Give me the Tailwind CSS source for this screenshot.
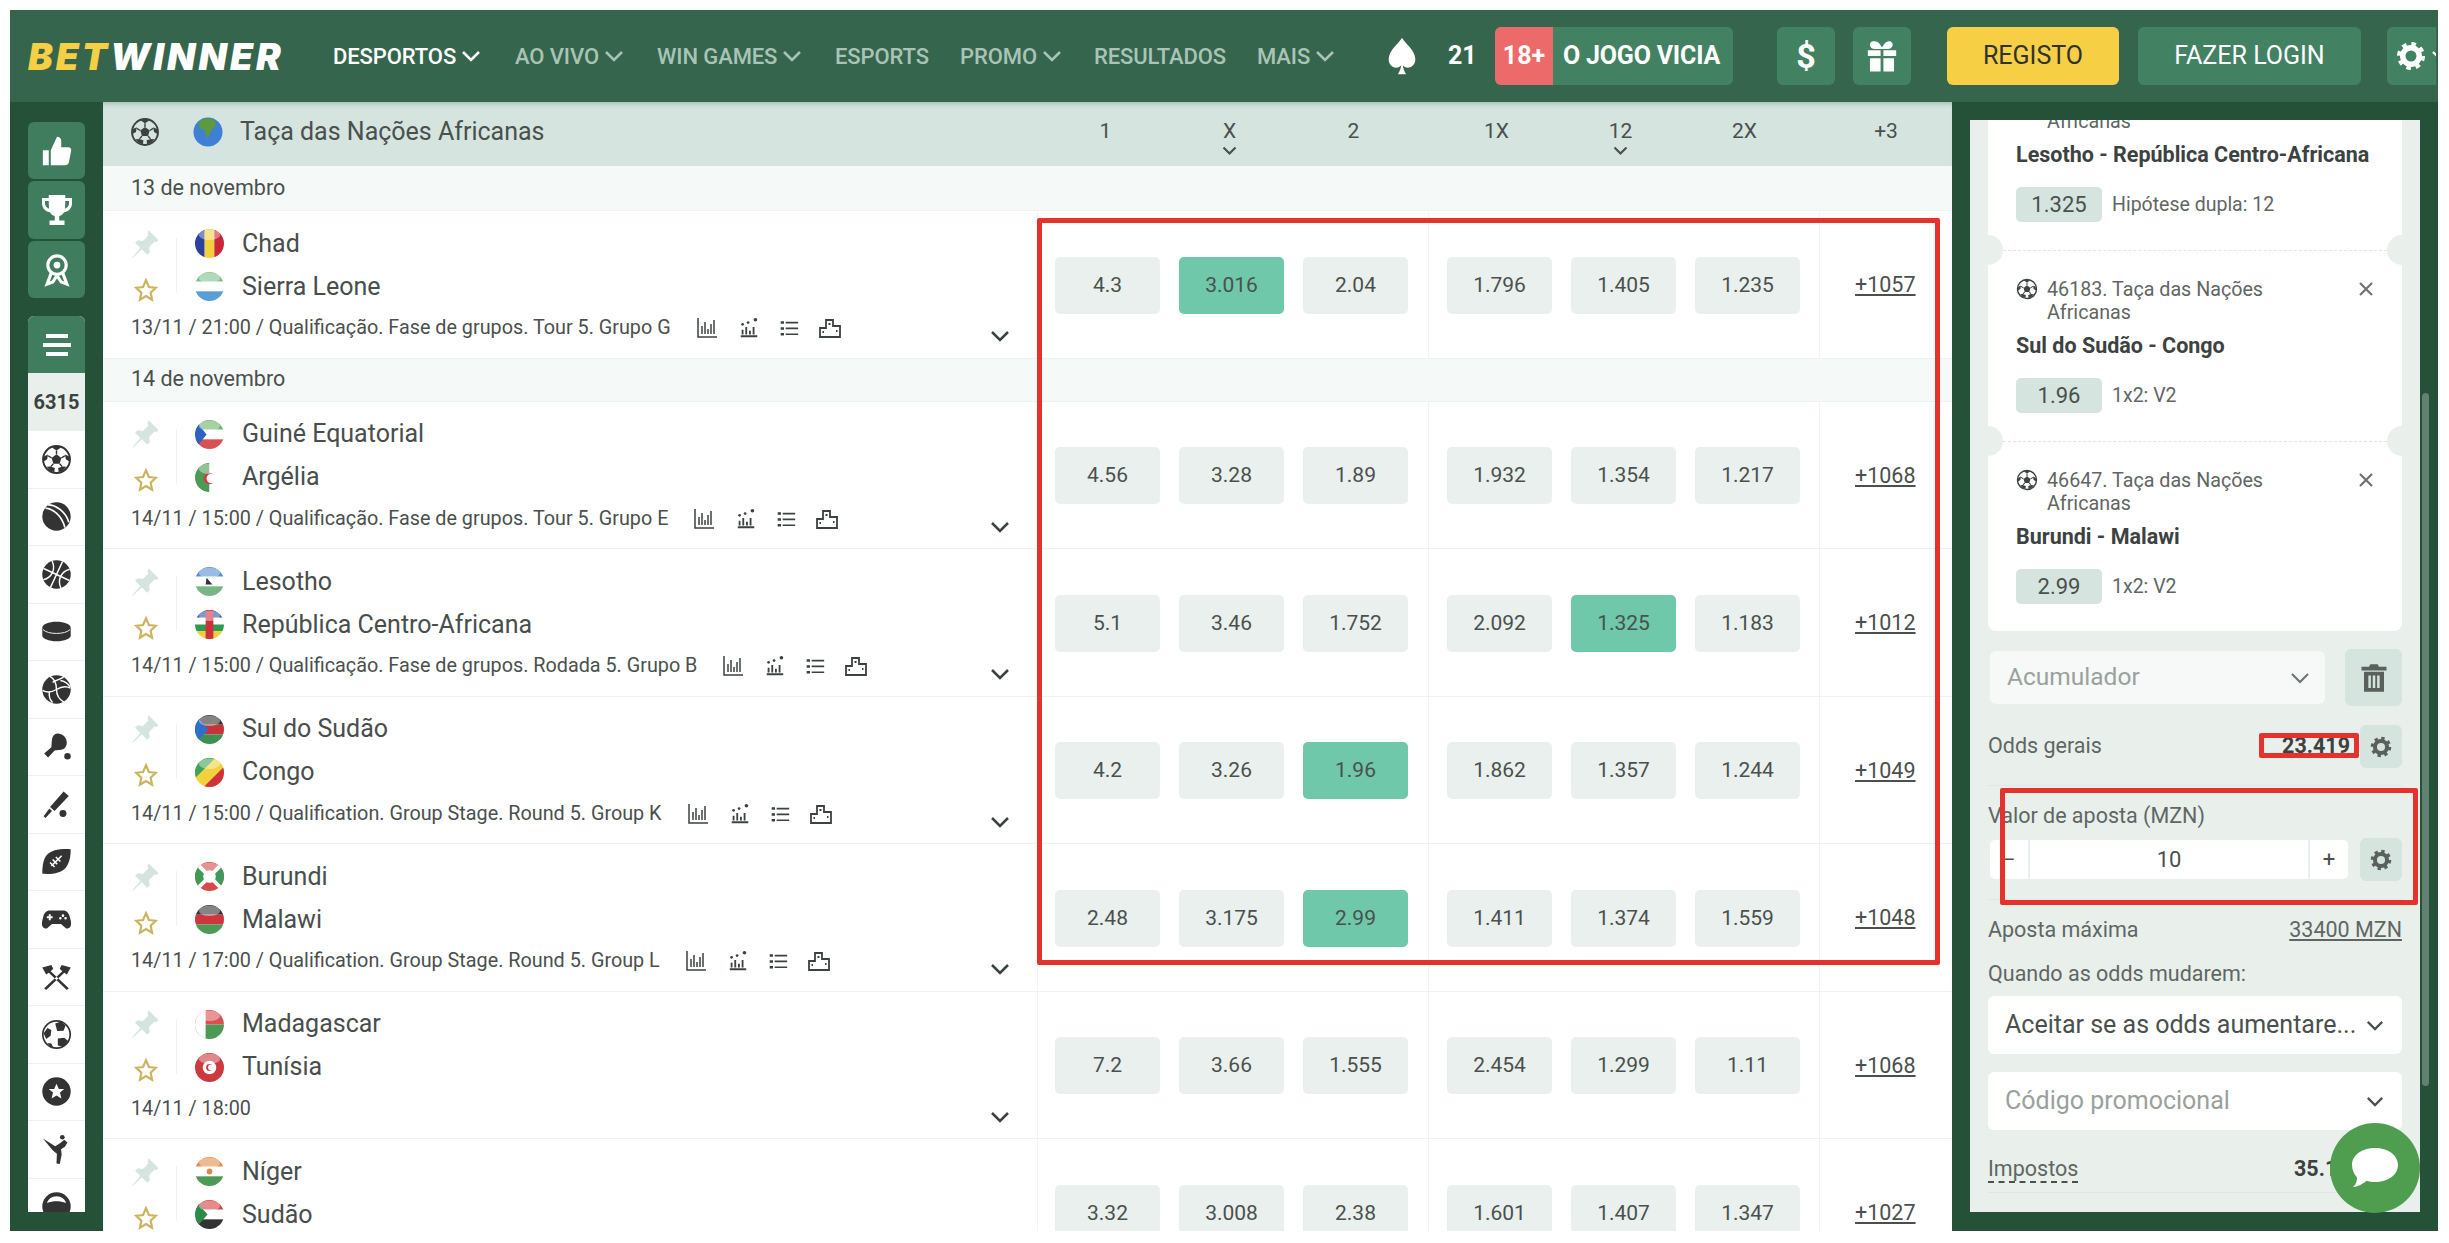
<!DOCTYPE html>
<html lang="pt">
<head>
    <meta charset="UTF-8">
    <title>Betwinner - Taça das Nações Africanas</title>
    <script src="https://cdn.jsdelivr.net/npm/@tailwindcss/browser@4"></script>
</head>
<body class="bg-white font-[family-name:Roboto,sans-serif] text-[#3c423f]">
    <!-- icon sprite -->
    <svg class="hidden" xmlns="http://www.w3.org/2000/svg">
        <symbol id="i-thumb" viewBox="0 0 24 24"><path d="M2 11.5h4.2V22H2zM7.6 11.5 12 2c1.8 0 3 1.2 3 3v4.4h5c1.4 0 2.3 1.100 2 2.400l-1.600 8.200c-.2 1.100-1.100 2-2.300 2H7.600z"/></symbol>
        <symbol id="i-trophy" viewBox="0 0 24 24"><path fill-rule="evenodd" d="M6.500 2h11v2H22v3.500c0 3-2 5.500-5.200 6-.8 1.300-2 2.200-3.300 2.500V19H17v3H7v-3h3.500v-3c-1.300-.3-2.500-1.200-3.300-2.500C4 13 2 10.500 2 7.500V4h4.500zM4 6v1.500c0 1.700 1 3 2.700 3.600C6.600 10 6.500 8 6.500 6zM20 6h-2.500c0 2-.1 4-.2 5.100C19 10.500 20 9.200 20 7.500z"/></symbol>
        <symbol id="i-award" viewBox="0 0 24 24"><g fill="none" stroke="currentColor" stroke-width="2.200"><circle cx="12" cy="8.500" r="6.500"/><path d="M8 14 5 22l4-1.500L12 16l3 4.500 4 1.500-3-8"/></g><circle cx="12" cy="8.500" r="2.400"/></symbol>
        <symbol id="i-soccer" viewBox="0 0 24 24"><circle cx="12" cy="12" r="10.400" fill="none" stroke="currentColor" stroke-width="1.500"/><path d="m12 8 3.800 2.800-1.400 4.400H9.600l-1.400-4.400zM12 1.800l3.500 1-3.500 2.200-3.500-2.200zM21.600 9.500l.4 4-2.800-1.600-.6-3.800zM2.400 9.500l3-1.400-.6 3.800L2 13.500zM17 20.500l-3.300 1.400-.4-3.400 3.500-1 2.800.2zM7 20.500l-2.600-2.800 2.800-.2 3.500 1-.4 3.400z"/><path d="M12 5v3M15.800 10.800l2.800-1.700M14.400 15.200l2 2.300M9.600 15.200l-2 2.300M8.200 10.800 5.400 9.100" stroke="currentColor" stroke-width="1.100"/></symbol>
        <symbol id="i-tennis" viewBox="0 0 24 24"><circle cx="12" cy="12" r="11"/><path d="M3.500 5.500C9 6 16 11 18.500 20.500M5.500 3C12 3 19.500 9 21.500 16.500" fill="none" stroke="#fff" stroke-width="1.300"/></symbol>
        <symbol id="i-basket" viewBox="0 0 24 24"><circle cx="12" cy="12" r="11"/><path d="M1 12h22M12 1v22M4.500 4c3 2.500 4 5 4 8s-1 5.500-4 8M19.500 4c-3 2.500-4 5-4 8s1 5.500 4 8" fill="none" stroke="#fff" stroke-width="1.100" transform="rotate(25 12 12)"/></symbol>
        <symbol id="i-puck" viewBox="0 0 24 24"><path d="M1 9c0-2.500 5-4.500 11-4.500S23 6.500 23 9v6c0 2.500-5 4.500-11 4.500S1 17.500 1 15z"/><path d="M1.500 10.500c2 2 6 3 10.500 3s8.500-1 10.500-3" fill="none" stroke="#fff" stroke-width=".7"/></symbol>
        <symbol id="i-volley" viewBox="0 0 24 24"><circle cx="12" cy="12" r="11"/><path d="M12 12C12 7 10 3.500 7 1.800M12 12c4-2.500 8-2.500 10.800-1M12 12c0 4.500 2.500 8 6 10M12 12c-4 2.300-8 2.300-10.800.6M6.500 14c-.5 3 .5 6 2.500 8M15 5c3 .5 6 2.500 7.500 5M9 6.500C12 4.500 15 4 17.500 2.500" fill="none" stroke="#fff" stroke-width="1.100"/></symbol>
        <symbol id="i-pingpong" viewBox="0 0 24 24"><path d="M13 2c3.500 0 7 3 7 7 0 1.800-1 3.500-2 4.500-1.500 1.500-5.500 1-7.500 1.500l-5 5.500-3-3L8 12.500c.5-2 0-6 1.200-8.300C10 2.800 11.500 2 13 2z"/><circle cx="20.500" cy="19.500" r="2.500"/></symbol>
        <symbol id="i-cricket" viewBox="0 0 24 24"><path d="m17.500 2 4 3.500L10.500 17l-3.500-3zM6.500 15l2 2-5 5.500-1.500-1.500z"/><circle cx="17" cy="19" r="2.700"/></symbol>
        <symbol id="i-football" viewBox="0 0 24 24"><path d="M23 2.500c-8-.5-15 .5-18.500 4.500C2 10 1 14.500 1 21.500c8 .5 14.500-.5 18-4.500 2.700-3.500 4-8 4-14.500z"/><path d="m8 15.500 8-8M9 10.500l3.500 3.500M11.500 8.500l3.500 3.500M7 12.800l3.500 3.500" stroke="#fff" stroke-width="1.200" fill="none"/></symbol>
        <symbol id="i-pad" viewBox="0 0 24 24"><path fill-rule="evenodd" d="M7 5h10c3 0 4.500 2 5.300 5 .8 3 1.500 5.500.5 7.500-.8 1.500-2.800 2-4 .8L15.500 15.500h-7L5.200 18.300c-1.200 1.200-3.200.7-4-.8-1-2 -.3-4.500.5-7.500C2.500 7 4 5 7 5zM6 8v1.500H4.500V11H6v1.500h1.500V11H9V9.500H7.500V8zM17 8a1 1 0 1 0 0 2 1 1 0 0 0 0-2zm-2 2a1 1 0 1 0 0 2 1 1 0 0 0 0-2zm4 0a1 1 0 1 0 0 2 1 1 0 0 0 0-2z"/></symbol>
        <symbol id="i-hammers" viewBox="0 0 24 24"><path d="M1 5l7-2 1.500 3L7.500 8l14 13-1.500 1.500L6 9l-2 1.500zM23 5l-7-2-1.500 3 2 2-14 13L4 22.500 18 9l2 1.500z"/></symbol>
        <symbol id="i-soccer2" viewBox="0 0 24 24"><circle cx="12" cy="12" r="10.600" fill="none" stroke="currentColor" stroke-width="1.300"/><path d="M11 3.500l4.500-1.600 3.500 3.100-1.500 4-5 .2zM2 11l3-4 3 1.500-.5 4.500L4 15.500zM13 15l5-.5 3 2.500-3.500 4.500-4.500-1zM5 18.500l3 .5 1.500 3c-2-.3-3.500-1.800-4.500-3.500z"/></symbol>
        <symbol id="i-starball" viewBox="0 0 24 24"><path fill-rule="evenodd" d="M12 1a11 11 0 1 1 0 22 11 11 0 0 1 0-22zm0 5-1.800 4H6l3.300 2.800L8.200 17.500 12 15l3.800 2.500-1.100-4.700L18 10h-4.200z"/></symbol>
        <symbol id="i-kick" viewBox="0 0 24 24"><path d="M1.500 3.500 11 9.500l4-2.500 3-2.500 2.500 2-2 3.300-3 2 .5 4-1.500 7.500-2.500-.5.300-7.500L9 12.500z"/><circle cx="16.500" cy="2.500" r="1.800"/></symbol>
        <symbol id="i-wheel" viewBox="0 0 24 24"><path fill-rule="evenodd" d="M12 1a11 11 0 1 1 0 22 11 11 0 0 1 0-22zm0 3a8 8 0 0 0-7.500 5.300C7 8.500 9.500 8 12 8s5 .5 7.500 1.300A8 8 0 0 0 12 4z"/></symbol>
        <symbol id="i-pin" viewBox="0 0 24 24"><path d="M14 1l8 8-2 1.500-1-.7-4.500 4.500.5 4.200-2 2-4.300-4.300L1.500 23l-.5-.5 6.500-7.300L3.300 11l2-2 4.200.5L14 5l-.8-1z"/></symbol>
        <symbol id="i-star" viewBox="0 0 24 24"><path d="m12 3 2.700 6.200 6.300.7-4.700 4.500 1.300 6.600-5.600-3.400L6.400 21l1.300-6.600L3 9.900l6.300-.7z" fill="none" stroke="currentColor" stroke-width="2"/></symbol>
        <symbol id="i-bars" viewBox="0 0 24 24"><path d="M3 2v19h19M7 18V10M10 18V6M13 18v-5M16 18V8M19 18V4" fill="none" stroke="currentColor" stroke-width="1.500"/></symbol>
        <symbol id="i-dots" viewBox="0 0 24 24"><path d="M3 21h18M5 19v-5M9 19v-8M13 19v-4M17 19v-8" fill="none" stroke="currentColor" stroke-width="2"/><circle cx="5" cy="8" r="1.500"/><circle cx="11" cy="6" r="1.500"/><circle cx="19" cy="3" r="2"/></symbol>
        <symbol id="i-list" viewBox="0 0 24 24"><path d="M2 4h4v3H2zM2 11h4v3H2zM2 18h4v3H2zM8 4.500h15v2H8zM8 11.500h15v2H8zM8 18.500h15v2H8z"/></symbol>
        <symbol id="i-podium" viewBox="0 0 24 24"><path d="M2 21v-9h6V4h7v6h7v11z" fill="none" stroke="currentColor" stroke-width="1.800"/><path d="M10.500 7h2v2h-2zM4.500 15h1.500v2H4.500zM18 14h1.500v2H18z" fill="currentColor"/></symbol>
        <symbol id="i-gear" viewBox="0 0 24 24"><circle cx="12" cy="12" r="6.600" fill="none" stroke="currentColor" stroke-width="4.400"/><circle cx="12" cy="12" r="9.500" fill="none" stroke="currentColor" stroke-width="3.400" stroke-dasharray="3.600 3.860"/></symbol>
        <symbol id="i-trash" viewBox="0 0 24 24"><path fill-rule="evenodd" d="M9 1h6l1 2h6v3H2V3h6zM4 7h16v16H4zm3.500 3v10h2V10zm3.500 0v10h2V10zm3.500 0v10h2V10z"/></symbol>
        <symbol id="i-gift" viewBox="0 0 24 24"><path d="M2 8h9v4H2zM13 8h9v4h-9zM3.500 13.500H11V23H3.500zM13 13.500h7.500V23H13zM7 1.500c2 0 3.800 2 5 4.500 1.200-2.500 3-4.500 5-4.500 1.800 0 2.800 1.300 2.500 3-.2 1.300-1.500 2.500-3.500 2.500H7C5 7 3.700 5.800 3.500 4.500c-.3-1.700.7-3 2.500-3z"/></symbol>
        <symbol id="i-spade" viewBox="0 0 24 24"><path d="M12 1c1.500 3 8 7.500 8 13 0 3-2 5-4.500 5-1.300 0-2.300-.6-3-1.400.2 2 .8 3.400 2 5.400h-5c1.200-2 1.800-3.400 2-5.400-.7.800-1.700 1.400-3 1.400C6 19 4 17 4 14 4 8.500 10.500 4 12 1z"/></symbol>
        <radialGradient id="gloss" cx="50%" cy="45%" r="55%"><stop offset="55%" stop-color="#fff" stop-opacity=".12"/><stop offset="100%" stop-color="#555" stop-opacity=".35"/></radialGradient>
    </svg>

    <div id="root" class="relative ml-[10px] mt-[10px] w-[2428px] h-[1221px] overflow-hidden flex flex-col bg-[#265139]">
        <!-- top bar -->
        <header class="h-[92px] shrink-0 bg-[#35654d] flex items-center pl-[18px] pr-0 text-white">
            <a class="w-[305px] shrink-0 font-[family-name:Inter,sans-serif] font-black italic text-[37px] tracking-[3px] leading-none">
                <span class="text-[#f7cf45]">BET</span><span>WINNER</span>
            </a>
            <nav class="flex items-center shrink-0 text-[22px] font-medium tracking-[-0.1px]">
                <a class="w-[182px] flex items-center gap-[5px] text-white">DESPORTOS<svg class="w-[20px] h-[12px]" viewBox="0 0 20 12" fill="none" stroke="currentColor" stroke-width="2.500"><path d="m2 2 8 8 8-8"/></svg></a>
                <a class="w-[142px] flex items-center gap-[5px] text-[#a9c4b6]">AO VIVO<svg class="w-[20px] h-[12px]" viewBox="0 0 20 12" fill="none" stroke="currentColor" stroke-width="2.500"><path d="m2 2 8 8 8-8"/></svg></a>
                <a class="w-[178px] flex items-center gap-[5px] text-[#a9c4b6]">WIN GAMES<svg class="w-[20px] h-[12px]" viewBox="0 0 20 12" fill="none" stroke="currentColor" stroke-width="2.500"><path d="m2 2 8 8 8-8"/></svg></a>
                <a class="w-[125px] text-[#a9c4b6]">ESPORTS</a>
                <a class="w-[134px] flex items-center gap-[5px] text-[#a9c4b6]">PROMO<svg class="w-[20px] h-[12px]" viewBox="0 0 20 12" fill="none" stroke="currentColor" stroke-width="2.500"><path d="m2 2 8 8 8-8"/></svg></a>
                <a class="w-[163px] text-[#a9c4b6]">RESULTADOS</a>
                <a class="w-[125px] flex items-center gap-[5px] text-[#a9c4b6]">MAIS<svg class="w-[20px] h-[12px]" viewBox="0 0 20 12" fill="none" stroke="currentColor" stroke-width="2.500"><path d="m2 2 8 8 8-8"/></svg></a>
            </nav>
            <svg class="w-[40px] h-[42px] shrink-0 fill-white"><use href="#i-spade"/></svg>
            <span class="ml-[26px] w-[47px] shrink-0 font-bold text-[25px]">21</span>
            <div class="flex h-[58px] w-[238px] shrink-0 rounded-[6px] overflow-hidden bg-[#438163] font-bold text-[25px]">
                <span class="w-[58px] bg-[#ec6a6a] flex items-center justify-center">18+</span>
                <span class="flex-1 flex items-center pl-[10px] whitespace-nowrap tracking-[-0.2px]">O JOGO VICIA</span>
            </div>
            <div class="ml-[44px] w-[58px] h-[58px] shrink-0 rounded-[6px] bg-[#438163] flex items-center justify-center font-bold text-[34px]">$</div>
            <div class="ml-[18px] w-[58px] h-[58px] shrink-0 rounded-[6px] bg-[#438163] flex items-center justify-center"><svg class="w-[34px] h-[34px] fill-white"><use href="#i-gift"/></svg></div>
            <div class="ml-[36px] w-[172px] h-[58px] shrink-0 rounded-[6px] bg-[#f7cf45] text-[#2d3330] flex items-center justify-center text-[25px]">REGISTO</div>
            <div class="ml-[19px] w-[223px] h-[58px] shrink-0 rounded-[6px] bg-[#438163] flex items-center justify-center text-[25px]">FAZER LOGIN</div>
            <div class="ml-[26px] w-[49px] h-[58px] shrink-0 rounded-l-[6px] overflow-hidden bg-[#438163] pl-[9px] flex items-center"><svg class="w-[30px] h-[30px] shrink-0 text-white"><use href="#i-gear"/></svg><svg class="ml-[6px] w-[14px] h-[10px] shrink-0" viewBox="0 0 14 10" fill="none" stroke="#fff" stroke-width="2.200"><path d="m1 1 6 6 6-6"/></svg></div>
        </header>

        <div class="flex flex-1 min-h-0">
            <!-- left rail -->
            <aside class="w-[93px] shrink-0 pl-[18px] pt-[20px]">
                <div class="w-[57px] flex flex-col gap-[2px] text-white">
                    <div class="h-[57px] rounded-[6px] bg-[#3f7d5e] flex items-center justify-center"><svg class="w-[34px] h-[34px] fill-white"><use href="#i-thumb"/></svg></div>
                    <div class="h-[58px] rounded-[6px] bg-[#3f7d5e] flex items-center justify-center"><svg class="w-[36px] h-[36px] fill-white"><use href="#i-trophy"/></svg></div>
                    <div class="h-[57px] rounded-[6px] bg-[#3f7d5e] flex items-center justify-center"><svg class="w-[34px] h-[34px] fill-white text-white"><use href="#i-award"/></svg></div>
                </div>
                <div class="mt-[18px] w-[57px] h-[896px] overflow-hidden rounded-t-[6px] bg-white">
                    <div class="h-[57px] bg-[#3f7d5e] flex flex-col items-center justify-center gap-[5px]">
                        <span class="block w-[22px] h-[4px] bg-white"></span>
                        <span class="block w-[28px] h-[4px] bg-white"></span>
                        <span class="block w-[22px] h-[4px] bg-white"></span>
                    </div>
                    <div class="h-[58px] bg-[#e9f0ec] flex items-center justify-center text-[20px] font-bold text-[#3c423f]">6315</div>
                    <div id="sports"></div>
                </div>
            </aside>

            <!-- events list -->
            <main class="w-[1849px] shrink-0 bg-white overflow-hidden">
                <div class="h-[64px] pb-[4px] bg-[#d5e4de] flex items-center text-[#4a504d] shadow-[inset_0_6px_6px_-6px_rgba(38,81,57,0.45)]">
                    <div class="w-[934px] shrink-0 flex items-center pl-[27px] text-[25px]">
                        <svg class="w-[30px] h-[30px] text-[#3c423f] fill-[#3c423f]"><use href="#i-soccer"/></svg>
                        <svg class="ml-[33px] w-[30px] h-[30px]" viewBox="0 0 30 30"><circle cx="15" cy="15" r="14.500" fill="#3f7fd6"/><path d="M9 3c4-2 10-2 13 1 2 3 0 6-3 8-1 3-3 7-5 9-2-3-1-6-3-8-3-1-6-2-5-6 0-2 1-3 3-4z" fill="#5e9a3c"/></svg>
                        <span class="ml-[17px]">Taça das Nações Africanas</span>
                    </div>
                    <div class="w-[391px] shrink-0 flex pl-[18px] gap-[19px] text-[21px]">
                        <span class="w-[105px] text-center -translate-x-[2px]">1</span>
                        <span class="w-[105px] text-center relative -translate-x-[2px]">X<svg class="absolute left-[45px] top-[30px] w-[15px] h-[10px]" viewBox="0 0 15 10" fill="none" stroke="currentColor" stroke-width="2.200"><path d="m1.500 1.500 6 6 6-6"/></svg></span>
                        <span class="w-[105px] text-center -translate-x-[2px]">2</span>
                    </div>
                    <div class="w-[391px] shrink-0 flex pl-[19px] gap-[19px] text-[21px]">
                        <span class="w-[105px] text-center -translate-x-[3px]">1X</span>
                        <span class="w-[105px] text-center relative -translate-x-[3px]">12<svg class="absolute left-[45px] top-[30px] w-[15px] h-[10px]" viewBox="0 0 15 10" fill="none" stroke="currentColor" stroke-width="2.200"><path d="m1.500 1.500 6 6 6-6"/></svg></span>
                        <span class="w-[105px] text-center -translate-x-[3px]">2X</span>
                    </div>
                    <div class="flex-1 text-[21px] pl-[34px]"><span class="block w-[66px] text-center">+3</span></div>
                </div>
                <div id="rows"></div>
            </main>

            <!-- coupon -->
            <aside class="relative w-[486px] shrink-0 px-[18px] pt-[18px] pb-[19px]">
                <div class="h-full overflow-hidden bg-[#e9f0ec] px-[18px]">
                    <div id="tickets" class="relative -mt-[61px] bg-white rounded-[8px]"></div>
                    <div class="mt-[18px] flex items-center">
                        <div class="ml-[2px] w-[335px] h-[53px] rounded-[6px] bg-[#f6f9f8] flex items-center justify-between pl-[17px] pr-[15px] text-[24.500px] text-[#9aa19d]">Acumulador<svg class="w-[20px] h-[12px] text-[#6d7470]" viewBox="0 0 20 12" fill="none" stroke="currentColor" stroke-width="2"><path d="m2 2 8 8 8-8"/></svg></div>
                        <div class="ml-auto w-[57px] h-[57px] rounded-[6px] bg-[#d5e4de] flex items-center justify-center"><svg class="w-[30px] h-[30px] fill-[#5a615d]"><use href="#i-trash"/></svg></div>
                    </div>
                    <div class="mt-[19px] h-[43px] flex items-center text-[21.500px] text-[#5f6663]">
                        <span>Odds gerais</span>
                        <span class="ml-auto mr-[10px] font-bold text-[#3c423f]">23.419</span>
                        <div class="w-[42px] h-[43px] rounded-[6px] bg-[#d5e4de] flex items-center justify-center"><svg class="w-[22px] h-[22px] text-[#5a615d]"><use href="#i-gear"/></svg></div>
                    </div>
                    <div class="mt-[17px] border-y border-[#dfe8e3] pt-[18px] pb-[18px]">
                        <div class="h-[24px] leading-[24px] text-[21.500px] text-[#5f6663]">Valor de aposta (MZN)</div>
                        <div class="mt-[10px] h-[43px] flex items-center">
                            <div class="ml-[2px] w-[358px] h-[39px] rounded-[5px] bg-white flex items-center text-[22px] text-[#4a504d]">
                                <span class="w-[40px] h-full border-r-2 border-[#e9f0ec] flex items-center justify-center">−</span>
                                <span class="flex-1 text-center">10</span>
                                <span class="w-[40px] h-full border-l-2 border-[#e9f0ec] flex items-center justify-center">+</span>
                            </div>
                            <div class="ml-auto w-[42px] h-[43px] rounded-[6px] bg-[#d5e4de] flex items-center justify-center"><svg class="w-[22px] h-[22px] text-[#5a615d]"><use href="#i-gear"/></svg></div>
                        </div>
                    </div>
                    <div class="mt-[18px] h-[24px] leading-[24px] flex justify-between text-[21.500px] text-[#5f6663]"><span>Aposta máxima</span><span class="underline">33400 MZN</span></div>
                    <div class="mt-[20px] h-[24px] leading-[24px] text-[21.500px] text-[#5f6663]">Quando as odds mudarem:</div>
                    <div class="mt-[10px] h-[58px] rounded-[6px] bg-white flex items-center justify-between pl-[17px] pr-[18px] text-[25px] text-[#4a504d]"><span class="whitespace-nowrap">Aceitar se as odds aumentare...</span><svg class="w-[18px] h-[11px] shrink-0" viewBox="0 0 20 12" fill="none" stroke="currentColor" stroke-width="2.500"><path d="m2 2 8 8 8-8"/></svg></div>
                    <div class="mt-[18px] h-[58px] rounded-[6px] bg-white flex items-center justify-between pl-[17px] pr-[18px] text-[25px] text-[#9aa19d]"><span>Código promocional</span><svg class="w-[18px] h-[11px] text-[#4a504d]" viewBox="0 0 20 12" fill="none" stroke="currentColor" stroke-width="2.500"><path d="m2 2 8 8 8-8"/></svg></div>
                    <div class="mt-[27px] pb-[12px] border-b border-[#dfe8e3] h-[36px] flex justify-between text-[21.500px] text-[#5f6663]"><span class="leading-[24px] h-[26px] border-b-2 border-dashed border-[#4a504d]">Impostos</span><span class="font-bold text-[#3c423f] leading-[24px]">35.12 MZN</span></div>
                </div>
                <!-- scrollbar thumb -->
                <div class="absolute left-[470px] top-[291px] w-[7px] h-[693px] rounded-[4px] bg-[#5f8272]"></div>
            </aside>
        </div>

        <!-- annotations drawn on top of the screenshot -->
        <div class="absolute left-[1027px] top-[208px] w-[903px] h-[747px] border-[5px] border-[#e5322d] rounded-[2px]"></div>
        <div class="absolute left-[2249px] top-[723px] w-[100px] h-[25px] border-[5px] border-[#e5322d] rounded-[2px]"></div>
        <div class="absolute left-[1990px] top-[778px] w-[418px] h-[117px] border-[5px] border-[#e5322d] rounded-[2px]"></div>

        <!-- chat bubble -->
        <div class="absolute left-[2320px] top-[1113px] w-[90px] h-[90px] rounded-full bg-[#4f9d4f] flex items-center justify-center">
            <svg class="w-[48px] h-[42px] fill-white" viewBox="0 0 48 42"><path d="M24 1c13 0 23 7 23 17s-10 17-23 17c-3 0-6-.4-8.500-1.200C12 37 7 40 2 40c3-2.500 4-6 4-9.500C3 27 1 23 1 18 1 8 11 1 24 1z"/></svg>
        </div>
    </div>

    <script>
        // Sidebar sports
        var sports = ['soccer','tennis','basket','puck','volley','pingpong','cricket','football','pad','hammers','soccer2','starball','kick','wheel'];
        document.getElementById('sports').innerHTML = sports.map(function (s) {
            return '<div class="h-[57.500px] border-b border-[#eef2f0] flex items-center justify-center text-[#333]"><svg class="w-[31px] h-[31px] fill-[#333]"><use href="#i-' + s + '"/></svg></div>';
        }).join('');

        // Flag bodies, 30x30 viewBox
        var flags = {
            chad: '<rect width="10" height="30" fill="#2a3f9e"/><rect x="10" width="10" height="30" fill="#f2d13c"/><rect x="20" width="10" height="30" fill="#c8283a"/>',
            sle: '<rect width="30" height="10" fill="#7cc08a"/><rect y="10" width="30" height="10" fill="#fff"/><rect y="20" width="30" height="10" fill="#5a9ed8"/>',
            geq: '<rect width="30" height="10" fill="#6fb16a"/><rect y="10" width="30" height="10" fill="#fff"/><rect y="20" width="30" height="10" fill="#d8504f"/><path d="M0 0l12 15L0 30z" fill="#2d62c0"/>',
            alg: '<rect width="15" height="30" fill="#4c9a56"/><rect x="15" width="15" height="30" fill="#fff"/><circle cx="15" cy="16" r="6" fill="#d63a3a"/><circle cx="17" cy="16" r="5" fill="#fff"/>',
            les: '<rect width="30" height="10" fill="#5b8ed0"/><rect y="10" width="30" height="10" fill="#fff"/><rect y="20" width="30" height="10" fill="#79b585"/><path d="M12 11l6 7h-7z" fill="#333"/>',
            car: '<rect width="30" height="8" fill="#2c54b0"/><rect y="8" width="30" height="7" fill="#fff"/><rect y="15" width="30" height="7" fill="#2f9a50"/><rect y="22" width="30" height="8" fill="#f0cf3a"/><rect x="11" width="8" height="30" fill="#d0303a"/>',
            ssd: '<rect width="30" height="10" fill="#333"/><rect y="10" width="30" height="10" fill="#c8323a"/><rect y="20" width="30" height="10" fill="#3d8f52"/><path d="M0 0l14 15L0 30z" fill="#2f6fcc"/>',
            cog: '<rect width="30" height="30" fill="#f2d13c"/><path d="M0 0h21L0 21z" fill="#3fa25a"/><path d="M30 30H9L30 9z" fill="#d0303a"/>',
            bdi: '<rect width="30" height="30" fill="#d64a4a"/><path d="M0 0l15 15L0 30zM30 0 15 15l15 15z" fill="#3f9a58"/><path d="M0 0l30 30M30 0 0 30" stroke="#fff" stroke-width="4"/><circle cx="15" cy="15" r="6.500" fill="#fff"/>',
            mwi: '<rect width="30" height="10" fill="#333"/><rect y="10" width="30" height="10" fill="#d0343c"/><rect y="20" width="30" height="10" fill="#4c9a56"/>',
            mdg: '<rect width="30" height="15" fill="#d8504f"/><rect y="15" width="30" height="15" fill="#4c9a56"/><rect width="11" height="30" fill="#fff"/>',
            tun: '<rect width="30" height="30" fill="#cc3a3f"/><circle cx="15" cy="15" r="7" fill="#fff"/><circle cx="15" cy="15" r="3.500" fill="#cc3a3f"/><circle cx="16.500" cy="15" r="3" fill="#fff"/>',
            ner: '<rect width="30" height="10" fill="#e08a4a"/><rect y="10" width="30" height="10" fill="#fff"/><rect y="20" width="30" height="10" fill="#4c9a56"/><circle cx="15" cy="15" r="3" fill="#e08a4a"/>',
            sdn: '<rect width="30" height="10" fill="#d0403f"/><rect y="10" width="30" height="10" fill="#fff"/><rect y="20" width="30" height="10" fill="#333"/><path d="M0 0l13 15L0 30z" fill="#2e8a4a"/>'
        };
        function flag(code) {
            return '<svg class="w-[29px] h-[29px] rounded-full shrink-0" viewBox="0 0 30 30">' + flags[code] +
                '<circle cx="15" cy="15" r="15" fill="url(#gloss)"/><ellipse cx="15" cy="6" rx="11" ry="5.500" fill="#fff" opacity=".4"/></svg>';
        }

        function team(code, name, pinned, divider) {
            var icon = pinned
                ? '<svg class="w-[30px] h-[30px] fill-[#d5e4de]"><use href="#i-pin"/></svg>'
                : '<svg class="w-[26px] h-[26px] ml-[2px] mt-[6px] text-[#c9b560] fill-[#c9b560]"><use href="#i-star"/></svg>';
            return '<div class="h-[43px] flex items-center">' +
                '<div class="w-[30px] shrink-0">' + icon + '</div>' +
                '<div class="ml-[15px] w-[19px] shrink-0 border-l border-[#eef2f0] ' + divider + '"></div>' +
                flag(code) +
                '<span class="ml-[18px] text-[25px] text-[#484e4b]">' + name + '</span></div>';
        }

        function odd(v) {
            var on = v.charAt(0) === '*';
            return '<div class="w-[105px] h-[57px] rounded-[5px] flex items-center justify-center text-[21px] text-[#4a504d] ' +
                (on ? 'bg-[#6ec8a9]' : 'bg-[#eaf0ed]') + '">' + (on ? v.slice(1) : v) + '</div>';
        }

        var tools = '<svg class="ml-[24px] w-[24px] h-[24px] shrink-0 text-[#3c423f] fill-[#3c423f]"><use href="#i-bars"/></svg>' +
            '<svg class="ml-[19px] w-[22px] h-[22px] shrink-0 text-[#3c423f] fill-[#3c423f]"><use href="#i-dots"/></svg>' +
            '<svg class="ml-[19px] w-[20px] h-[20px] shrink-0 fill-[#3c423f]"><use href="#i-list"/></svg>' +
            '<svg class="ml-[18px] w-[26px] h-[24px] shrink-0 text-[#3c423f]"><use href="#i-podium"/></svg>';

        var events = [
            { date: '13 de novembro', h: 'h-[45px]', a: ['chad', 'Chad'], b: ['sle', 'Sierra Leone'], meta: '13/11 / 21:00 / Qualificação. Fase de grupos. Tour 5. Grupo G', tools: true, odds: ['4.3', '*3.016', '2.04', '1.796', '1.405', '1.235'], more: '+1057' },
            { date: '14 de novembro', h: 'h-[43px]', a: ['geq', 'Guiné Equatorial'], b: ['alg', 'Argélia'], meta: '14/11 / 15:00 / Qualificação. Fase de grupos. Tour 5. Grupo E', tools: true, odds: ['4.56', '3.28', '1.89', '1.932', '1.354', '1.217'], more: '+1068' },
            { a: ['les', 'Lesotho'], b: ['car', 'República Centro-Africana'], meta: '14/11 / 15:00 / Qualificação. Fase de grupos. Rodada 5. Grupo B', tools: true, odds: ['5.1', '3.46', '1.752', '2.092', '*1.325', '1.183'], more: '+1012' },
            { a: ['ssd', 'Sul do Sudão'], b: ['cog', 'Congo'], meta: '14/11 / 15:00 / Qualification. Group Stage. Round 5. Group K', tools: true, odds: ['4.2', '3.26', '*1.96', '1.862', '1.357', '1.244'], more: '+1049' },
            { a: ['bdi', 'Burundi'], b: ['mwi', 'Malawi'], meta: '14/11 / 17:00 / Qualification. Group Stage. Round 5. Group L', tools: true, odds: ['2.48', '3.175', '*2.99', '1.411', '1.374', '1.559'], more: '+1048' },
            { a: ['mdg', 'Madagascar'], b: ['tun', 'Tunísia'], meta: '14/11 / 18:00', tools: false, odds: ['7.2', '3.66', '1.555', '2.454', '1.299', '1.11'], more: '+1068' },
            { a: ['ner', 'Níger'], b: ['sdn', 'Sudão'], meta: '', tools: false, odds: ['3.32', '3.008', '2.38', '1.601', '1.407', '1.347'], more: '+1027' }
        ];

        document.getElementById('rows').innerHTML = events.map(function (e) {
            var html = '';
            if (e.date) {
                html += '<div class="' + e.h + ' bg-[#f5faf8] border-b border-[#eef2f0] flex items-center pl-[28px] text-[21.500px] text-[#4a504d]">' + e.date + '</div>';
            }
            html += '<div class="h-[147.500px] flex border-b border-[#eef2f0]">' +
                '<div class="w-[934px] shrink-0 pl-[28px] pr-[27px] pt-[11px]">' +
                team(e.a[0], e.a[1], true, 'h-[27px] self-end') +
                team(e.b[0], e.b[1], false, 'h-[28px] self-start') +
                '<div class="h-[40px] flex items-center text-[19.800px] text-[#4a504d] whitespace-nowrap"><span>' + e.meta + '</span>' + (e.tools ? tools : '') +
                '<svg class="ml-auto mt-[16px] w-[20px] h-[12px] shrink-0 text-[#3c423f]" viewBox="0 0 20 12" fill="none" stroke="currentColor" stroke-width="2.500"><path d="m2 2 8 8 8-8"/></svg></div></div>' +
                '<div class="w-[391px] shrink-0 flex items-center gap-[19px] pl-[17px] pt-[2px] border-l border-[#f0f4f2]">' + e.odds.slice(0, 3).map(odd).join('') + '</div>' +
                '<div class="w-[391px] shrink-0 flex items-center gap-[19px] pl-[18px] pt-[2px] border-l border-[#f0f4f2]">' + e.odds.slice(3).map(odd).join('') + '</div>' +
                '<div class="flex-1 flex items-center border-l border-[#f0f4f2] pl-[35px] pt-[2px] text-[21.500px] text-[#4a504d] underline">' + e.more + '</div>' +
                '</div>';
            return html;
        }).join('');

        // Coupon tickets
        var tickets = [
            ['46120', 'Lesotho - República Centro-Africana', '1.325', 'Hipótese dupla: 12', 'h-[191px]'],
            ['46183', 'Sul do Sudão - Congo', '1.96', '1x2: V2', 'h-[191px]'],
            ['46647', 'Burundi - Malawi', '2.99', '1x2: V2', 'h-[190px]']
        ];
        document.getElementById('tickets').innerHTML = tickets.map(function (t, i) {
            var notch = i === 0 ? '' :
                '<span class="absolute -left-[15px] -top-[15px] w-[30px] h-[30px] rounded-full bg-[#e9f0ec]"></span>' +
                '<span class="absolute -right-[15px] -top-[15px] w-[30px] h-[30px] rounded-full bg-[#e9f0ec]"></span>' +
                '<span class="absolute left-[15px] right-[15px] top-0 border-t border-dashed border-[#dfe7e3]"></span>';
            return '<div class="relative ' + t[4] + ' px-[28px] pt-[28px]">' + notch +
                '<div class="flex text-[19.700px] leading-[23px] text-[#5f6663]">' +
                '<svg class="w-[22px] h-[22px] shrink-0 fill-[#3c423f] text-[#3c423f]"><use href="#i-soccer"/></svg>' +
                '<span class="ml-[9px] w-[240px]">' + t[0] + '. Taça das Nações Africanas</span>' +
                '<svg class="ml-auto w-[16px] h-[16px] mt-[3px] text-[#6d7470]" viewBox="0 0 16 16" fill="none" stroke="currentColor" stroke-width="2.200"><path d="m2 2 12 12M14 2 2 14"/></svg></div>' +
                '<div class="mt-[10px] h-[24px] leading-[24px] text-[21.500px] font-bold text-[#3c423f] whitespace-nowrap">' + t[1] + '</div>' +
                '<div class="mt-[20px] flex items-center"><span class="w-[86px] h-[35px] rounded-[5px] bg-[#d5e4de] flex items-center justify-center text-[22px] text-[#4a504d]">' + t[2] + '</span>' +
                '<span class="ml-[10px] text-[19.500px] text-[#5f6663]">' + t[3] + '</span></div></div>';
        }).join('');
    </script>
</body>
</html>
